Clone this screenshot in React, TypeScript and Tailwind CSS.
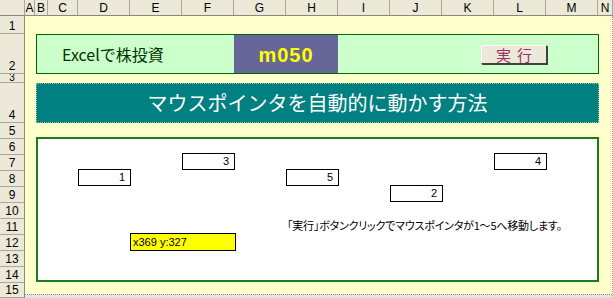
const colHeads: [string, string][] = [
  ['', 'w-[25px]'],
  ['A', 'w-[10px]'],
  ['B', 'w-[13px]'],
  ['C', 'w-[30px]'],
  ['D', 'w-[52px]'],
  ['E', 'w-[52px]'],
  ['F', 'w-[52px]'],
  ['G', 'w-[52px]'],
  ['H', 'w-[52px]'],
  ['I', 'w-[52px]'],
  ['J', 'w-[52px]'],
  ['K', 'w-[52px]'],
  ['L', 'w-[52px]'],
  ['M', 'w-[52px]'],
  ['N', 'flex-1'],
]

const rowHeads: [string, string][] = [
  ['1', 'h-[18px]'],
  ['2', 'h-[40px]'],
  ['3', 'h-[9px]'],
  ['4', 'h-[40px]'],
  ['5', 'h-[16px]'],
  ['6', 'h-[16px]'],
  ['7', 'h-[16px]'],
  ['8', 'h-[16px]'],
  ['9', 'h-[16px]'],
  ['10', 'h-[16px]'],
  ['11', 'h-[16px]'],
  ['12', 'h-[16px]'],
  ['13', 'h-[16px]'],
  ['14', 'h-[16px]'],
  ['15', 'flex-1'],
]

const jp = "font-['Noto_Sans_CJK_JP',sans-serif]"

function NumBox({ n, className }: { n: string; className: string }) {
  return (
    <div className={`${className} w-[53px] h-[17px] border border-black bg-white flex items-center justify-end pr-[5px] text-[11px] leading-none`}>
      {n}
    </div>
  )
}

export default function App() {
  return (
    <div className="w-[613px] h-[298px] overflow-hidden bg-[#ECE9D8] font-['Liberation_Sans',sans-serif] text-black">
      {/* column headers */}
      <div className="flex h-[16px] border-b border-[#8C8A7C]">
        {colHeads.map(([label, w], i) => (
          <div
            key={i}
            className={`${w} flex items-center justify-center border-r border-[#ACA899] text-[12px] leading-none`}
          >
            {label}
          </div>
        ))}
      </div>

      <div className="flex h-[282px]">
        {/* row headers */}
        <div className="w-[25px] flex flex-col border-r border-[#8C8A7C]">
          {rowHeads.map(([label, h]) => (
            <div
              key={label}
              className={`${h} flex items-end justify-center border-b border-[#ACA899] text-[12px] leading-[13px] overflow-hidden`}
            >
              {label === '3' ? <span className="leading-[8px] text-[10px]">{label}</span> : label}
            </div>
          ))}
        </div>

        {/* sheet */}
        <div className="flex-1 flex flex-col bg-[#FFFFCC] border-r border-dotted border-[#D88C8C]">
          {/* header panel */}
          <div className="ml-[11px] mt-[18px] w-[563px] h-[40px] border border-[#006600] bg-[#CCFFCC] flex items-center">
            <div className={`w-[197px] pl-[25px] text-[16px] text-[#003300] ${jp}`}>Excelで株投資</div>
            <div className="w-[104px] self-stretch bg-[#666699] flex items-center justify-center">
              <span className="text-[#FFFF00] font-bold text-[20px] tracking-[1px] pt-[1px]">m050</span>
            </div>
            <button
              className={`ml-[143px] w-[66px] h-[19px] bg-[#ECE9D8] border border-t-white border-l-white border-r-[#404040] border-b-[#404040] shadow-[1px_1px_0_#404040] flex items-center justify-center text-[15px] leading-none text-[#993366] tracking-[6px] pl-[6px] ${jp}`}
            >
              実行
            </button>
          </div>

          {/* title band */}
          <div className="ml-[11px] mt-[9px] w-[563px] h-[40px] bg-[#008080] border border-dotted border-[#99CC99] flex items-center justify-center">
            <span className={`text-white text-[20px] leading-none ${jp}`}>マウスポインタを自動的に動かす方法</span>
          </div>

          {/* canvas panel */}
          <div className="ml-[11px] mt-[14px] w-[563px] h-[145px] border-2 border-[#1E7A1E] bg-white grid grid-cols-[40px_repeat(10,52px)] grid-rows-[14px_repeat(8,16px)]">
            <NumBox n="3" className="col-start-4 row-start-2" />
            <NumBox n="4" className="col-start-10 row-start-2" />
            <NumBox n="1" className="col-start-2 row-start-3" />
            <NumBox n="5" className="col-start-6 row-start-3" />
            <NumBox n="2" className="col-start-8 row-start-4" />
            <div className={`col-start-6 col-span-6 row-start-6 text-[11px] leading-[16px] tracking-[-0.2px] whitespace-nowrap pl-[1px] [font-feature-settings:'palt'] ${jp}`}>
              「実行」ボタンクリックでマウスポインタが1～5へ移動します。
            </div>
            <div className="col-start-3 col-span-2 row-start-7 w-[106px] h-[18px] border border-black bg-[#FFFF00] flex items-center pl-[2px] text-[11px] leading-none">
              x369 y:327
            </div>
          </div>

          <div className="mt-auto h-[4px] border-t border-dotted border-[#8C8C8C] bg-[#E4E4E4]" />
        </div>
      </div>
    </div>
  )
}
